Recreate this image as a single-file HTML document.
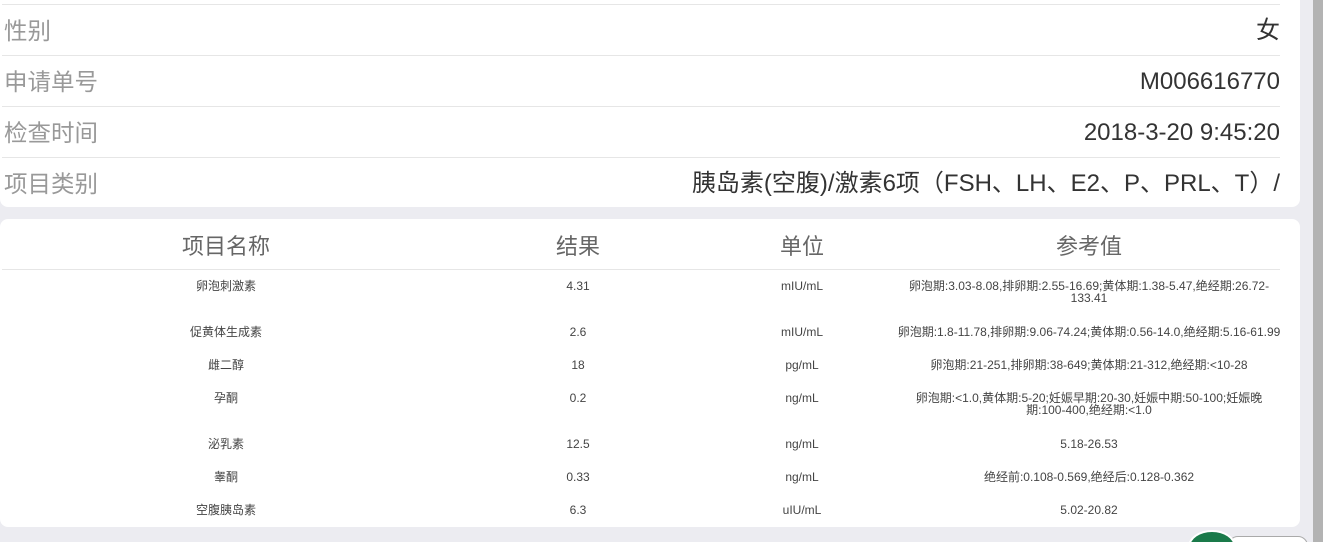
<!DOCTYPE html><html style="overflow:hidden;width:1323px;height:542px"><head><meta charset="utf-8"><style>
body{margin:0;width:1323px;height:542px;background:#ececf1;font-family:"Liberation Sans","Noto Sans CJK SC",sans-serif;position:relative;overflow:hidden}
.card1{position:absolute;left:0;top:-10px;width:1300px;height:217px;background:#fff;border-radius:0 0 8px 8px}
.card2{position:absolute;left:0;top:219px;width:1300px;height:308px;background:#fff;border-radius:8px}
.line{position:absolute;left:2px;width:1278px;height:1px;background:#e6e6e6}
.lab{position:absolute;left:4px;font-size:23.5px;color:#999;line-height:26px}
.val{position:absolute;right:43px;font-size:24px;color:#333;line-height:26px;white-space:nowrap}
.h{position:absolute;font-size:22px;color:#666;transform:translateX(-50%);white-space:nowrap}
.c{position:absolute;font-size:12px;color:#444;transform:translateX(-50%);text-align:center;line-height:12px;white-space:nowrap}
.sb{position:absolute;left:1313px;top:0;width:10px;height:542px;background:#b3b3b3}
</style></head><body>
<div class="card1"></div>
<div class="line" style="top:4px"></div>
<div class="line" style="top:55px"></div>
<div class="line" style="top:106px"></div>
<div class="line" style="top:157px"></div>
<div class="lab" style="top:18px">性别</div><div class="val" style="top:18px">女</div>
<div class="lab" style="top:69px">申请单号</div><div class="val" style="top:69px">M006616770</div>
<div class="lab" style="top:120px">检查时间</div><div class="val" style="top:120px">2018-3-20 9:45:20</div>
<div class="lab" style="top:171px">项目类别</div><div class="val" style="top:171px">胰岛素(空腹)/激素6项（FSH、LH、E2、P、PRL、T）/</div>
<div class="card2"></div>
<div class="h" style="left:226px;top:229px">项目名称</div>
<div class="h" style="left:578px;top:229px">结果</div>
<div class="h" style="left:802px;top:229px">单位</div>
<div class="h" style="left:1089px;top:229px">参考值</div>
<div class="line" style="top:269px"></div>
<div class="c" style="left:226px;top:280px">卵泡刺激素</div><div class="c" style="left:578px;top:280px">4.31</div><div class="c" style="left:802px;top:280px">mIU/mL</div><div class="c" style="left:1089px;top:280px">卵泡期:3.03-8.08,排卵期:2.55-16.69;黄体期:1.38-5.47,绝经期:26.72-<br>133.41</div>
<div class="c" style="left:226px;top:326px">促黄体生成素</div><div class="c" style="left:578px;top:326px">2.6</div><div class="c" style="left:802px;top:326px">mIU/mL</div><div class="c" style="left:1089px;top:326px">卵泡期:1.8-11.78,排卵期:9.06-74.24;黄体期:0.56-14.0,绝经期:5.16-61.99</div>
<div class="c" style="left:226px;top:359px">雌二醇</div><div class="c" style="left:578px;top:359px">18</div><div class="c" style="left:802px;top:359px">pg/mL</div><div class="c" style="left:1089px;top:359px">卵泡期:21-251,排卵期:38-649;黄体期:21-312,绝经期:&lt;10-28</div>
<div class="c" style="left:226px;top:392px">孕酮</div><div class="c" style="left:578px;top:392px">0.2</div><div class="c" style="left:802px;top:392px">ng/mL</div><div class="c" style="left:1089px;top:392px">卵泡期:&lt;1.0,黄体期:5-20;妊娠早期:20-30,妊娠中期:50-100;妊娠晚<br>期:100-400,绝经期:&lt;1.0</div>
<div class="c" style="left:226px;top:438px">泌乳素</div><div class="c" style="left:578px;top:438px">12.5</div><div class="c" style="left:802px;top:438px">ng/mL</div><div class="c" style="left:1089px;top:438px">5.18-26.53</div>
<div class="c" style="left:226px;top:471px">睾酮</div><div class="c" style="left:578px;top:471px">0.33</div><div class="c" style="left:802px;top:471px">ng/mL</div><div class="c" style="left:1089px;top:471px">绝经前:0.108-0.569,绝经后:0.128-0.362</div>
<div class="c" style="left:226px;top:504px">空腹胰岛素</div><div class="c" style="left:578px;top:504px">6.3</div><div class="c" style="left:802px;top:504px">uIU/mL</div><div class="c" style="left:1089px;top:504px">5.02-20.82</div>
<div style="position:absolute;left:1228px;top:536px;width:78px;height:20px;border:1px solid #aaa;border-radius:10px;background:#fff"></div>
<div style="position:absolute;left:1188px;top:530px;width:44px;height:30px;border-radius:50%;background:#1a7a4a;border:2px solid #fff"></div>
<div class="sb"></div>
</body></html>
